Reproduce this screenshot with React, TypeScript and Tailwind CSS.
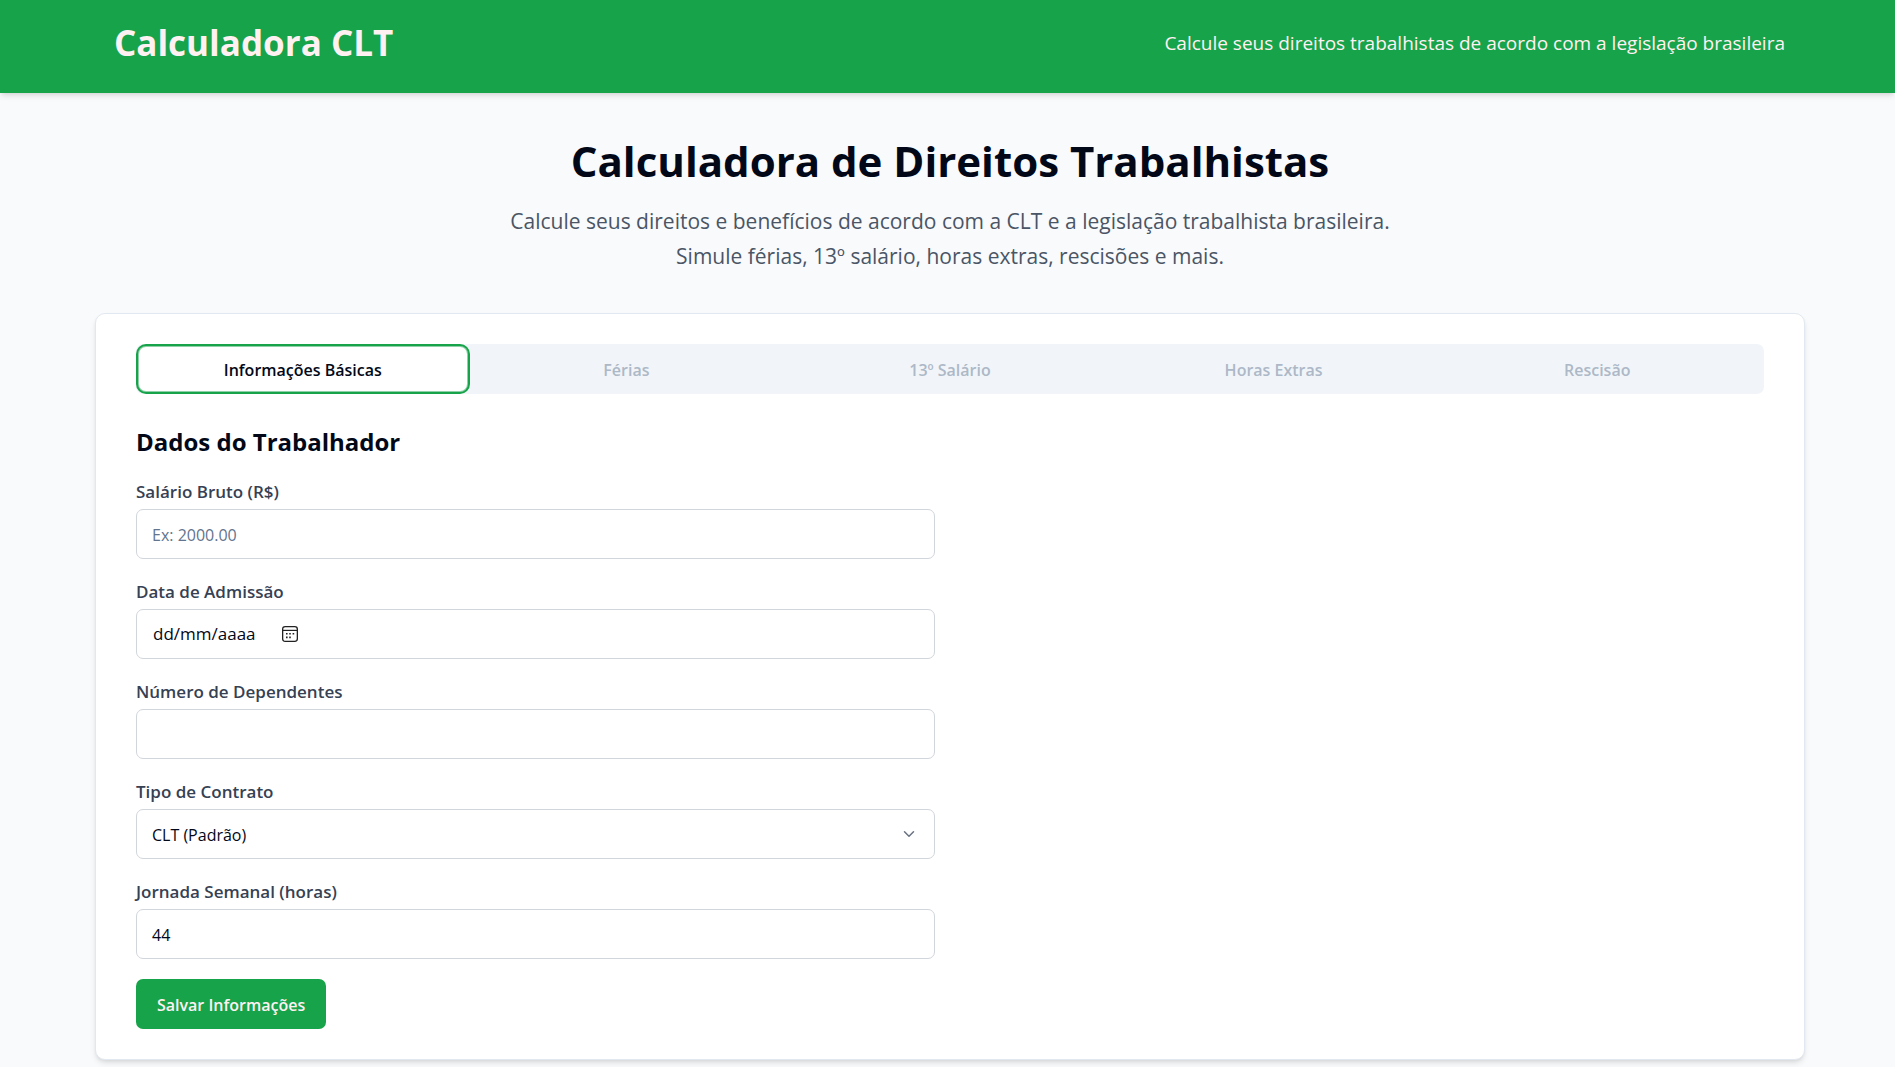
import { useState } from "react";
import type { ReactNode } from "react";
import { ChevronDown } from "lucide-react";

const TABS = ["Informações Básicas", "Férias", "13º Salário", "Horas Extras", "Rescisão"];

const FIELD =
  "block h-[50px] w-full rounded-[7px] border border-gray-300 bg-white px-[15px] pt-0.5 text-[16px] text-[#020817] placeholder:text-slate-500";

function Field({ id, label, children }: { id: string; label: string; children: ReactNode }) {
  return (
    <div className="flex flex-col">
      <label htmlFor={id} className="h-[30px] text-[17px] leading-[26px] font-semibold text-gray-700">
        {label}
      </label>
      {children}
    </div>
  );
}

function CalendarIcon() {
  return (
    <svg viewBox="0 0 16 16" className="size-4" fill="none" aria-hidden="true">
      <rect x="0.65" y="0.65" width="14.7" height="14.7" rx="2.5" stroke="#222" strokeWidth="1.3" />
      <path d="M1 4.4h14" stroke="#222" strokeWidth="1.2" />
      <path
        d="M4 7h1.6v1.6H4zM7.2 7h1.6v1.6H7.2zM10.6 7h1.6v1.6h-1.6zM4 10.6h1.6v1.6H4zM7.2 10.6h1.6v1.6H7.2z"
        fill="#222"
      />
    </svg>
  );
}

export default function App() {
  const [active, setActive] = useState(TABS[0]);

  return (
    <div className="min-h-screen bg-[#f9fafc] font-['Open_Sans',sans-serif] text-[#020817]">
      <header className="bg-[#17a34a] shadow-md">
        <div className="flex h-[93px] items-center justify-between pr-[110px] pb-2 pl-[114px]">
          <h1 className="text-[35px] leading-[45px] font-bold text-[#fff1f2]">Calculadora CLT</h1>
          <p className="text-[19px] leading-[30px] text-[#fff1f2]">
            Calcule seus direitos trabalhistas de acordo com a legislação brasileira
          </p>
        </div>
      </header>

      <main className="flex flex-col pt-10 pr-[90px] pb-2 pl-[95px]">
        <div className="mb-[39px] flex flex-col items-center text-center">
          <h2 className="mb-4 text-[42px] leading-[55px] font-bold">Calculadora de Direitos Trabalhistas</h2>
          <p className="max-w-[900px] text-[21px] leading-[35px] text-gray-600">
            Calcule seus direitos e benefícios de acordo com a CLT e a legislação trabalhista brasileira. Simule
            férias, 13º salário, horas extras, rescisões e mais.
          </p>
        </div>

        <section className="rounded-[10px] border border-slate-200 bg-white px-10 py-[30px] shadow-md">
          <div role="tablist" className="grid grid-cols-5 rounded-[7px] bg-slate-100 p-[5px]">
            {TABS.map((tab) => (
              <button
                key={tab}
                type="button"
                role="tab"
                aria-selected={tab === active}
                onClick={() => setActive(tab)}
                className={
                  tab === active
                    ? "h-10 rounded-[5px] bg-white pt-0.5 text-[16px] font-semibold shadow-[0_0_0_2px_white,0_0_0_3px_#8fd0a8,0_0_0_5px_#17a34a]"
                    : "h-10 rounded-[5px] pt-0.5 text-[16px] font-semibold text-[#adb8c7]"
                }
              >
                {tab}
              </button>
            ))}
          </div>

          <form className="mt-[30px] flex w-1/2 flex-col pr-[15px]" onSubmit={(e) => e.preventDefault()}>
            <h3 className="mb-5 text-[24px] leading-[35px] font-bold">Dados do Trabalhador</h3>
            <div className="flex flex-col gap-5">
              <Field id="salario" label="Salário Bruto (R$)">
                <input id="salario" type="number" placeholder="Ex: 2000.00" className={FIELD} />
              </Field>
              <Field id="admissao" label="Data de Admissão">
                <div className="flex h-[50px] items-center rounded-[7px] border border-gray-300 bg-white px-4">
                  <input
                    id="admissao"
                    type="text"
                    placeholder="dd/mm/aaaa"
                    className="w-[129px] bg-transparent text-[17px] outline-none placeholder:text-[#020817]"
                  />
                  <button type="button" aria-label="Abrir calendário">
                    <CalendarIcon />
                  </button>
                </div>
              </Field>
              <Field id="dependentes" label="Número de Dependentes">
                <input id="dependentes" type="number" className={FIELD} />
              </Field>
              <Field id="contrato" label="Tipo de Contrato">
                <div className="relative">
                  <select
                    id="contrato"
                    className="block h-[50px] w-full appearance-none rounded-[7px] border border-gray-300 bg-white px-[15px] pt-0.5 text-[16px] text-[#020817]"
                  >
                    <option>CLT (Padrão)</option>
                  </select>
                  <ChevronDown
                    className="pointer-events-none absolute top-4 right-[17px] size-[18px] text-gray-500"
                    strokeWidth={2}
                  />
                </div>
              </Field>
              <Field id="jornada" label="Jornada Semanal (horas)">
                <input id="jornada" type="number" defaultValue={44} className={FIELD} />
              </Field>
              <button
                type="submit"
                className="h-[50px] self-start rounded-[7px] bg-[#17a34a] px-[21px] pt-0.5 text-[16px] font-semibold text-[#fff1f2]"
              >
                Salvar Informações
              </button>
            </div>
          </form>
        </section>
      </main>
    </div>
  );
}
